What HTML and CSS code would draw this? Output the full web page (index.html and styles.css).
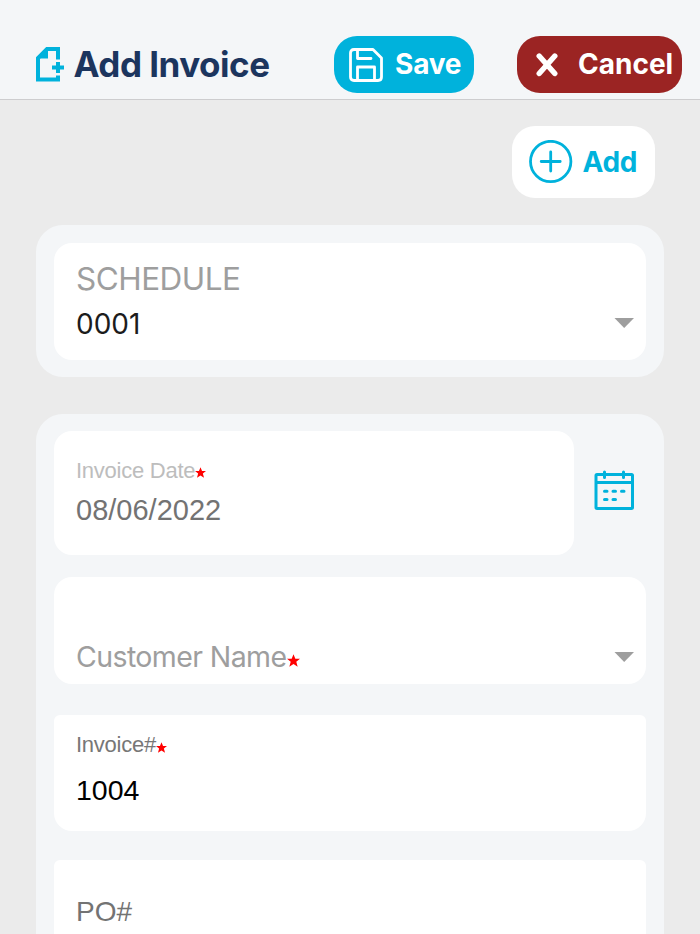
FILE: index.html
```html
<!DOCTYPE html>
<html lang="en">

<head>
    <meta charset="UTF-8">
    <title>Add Invoice</title>
    <link rel="stylesheet" href="styles.css">
</head>

<body>
    <header class="topbar">
        <svg class="doc-icon" width="28" height="36" viewBox="0 0 28 36">
            <path d="M22 12.500V2H11L2 11V32.500H22V28.500" fill="none" stroke="#00b2dc" stroke-width="4"/>
            <path d="M12 1V11.500H1V10L10 1Z" fill="#00b2dc"/>
            <path d="M16 20.500H28M22 15V26" fill="none" stroke="#00b2dc" stroke-width="4"/>
        </svg>
        <h1 class="title">Add Invoice</h1>
        <button class="btn save" type="button">
            <svg class="save-icon" width="34" height="34" viewBox="0 0 34 34" fill="none" stroke="#fff" stroke-width="2.800" stroke-linejoin="round" stroke-linecap="round">
                <path d="M5 1.500H24L32.500 10V29Q32.500 32.500 29 32.500H5Q1.500 32.500 1.500 29V5Q1.500 1.500 5 1.500Z"/>
                <path d="M8.500 2V10.500H22M8.500 32V19H25.500V32"/>
            </svg>
            <span class="save-text">Save</span>
        </button>
        <button class="btn cancel" type="button">
            <svg class="cancel-icon" width="22" height="24" viewBox="0 0 22 24">
                <path d="M3.200 3L18.800 20.500M18.800 3L3.200 20.500" fill="none" stroke="#fff" stroke-width="5.400" stroke-linecap="round"/>
            </svg>
            <span class="cancel-text">Cancel</span>
        </button>
    </header>

    <main class="content">
        <button class="btn add" type="button">
            <svg class="add-icon" width="44" height="44" viewBox="0 0 44 44" fill="none" stroke="#00b2dc" stroke-width="2.800" stroke-linecap="round">
                <circle cx="21.700" cy="21.500" r="20.200"/>
                <path d="M12.200 21.500H31.200M21.700 12V31"/>
            </svg>
            <span class="add-text">Add</span>
        </button>

        <section class="card schedule-card">
            <div class="field schedule">
                <div class="field-text">
                    <div class="schedule-label">SCHEDULE</div>
                    <div class="schedule-value">0001</div>
                </div>
                <svg class="arrow" width="20" height="10" viewBox="0 0 20 10"><path d="M0.500 0H20L10.200 10Z" fill="#9e9e9e"/></svg>
            </div>
        </section>

        <section class="card form-card">
            <div class="date-row">
                <div class="field date">
                    <div class="small-label light"><span class="date-label">Invoice Date</span><svg class="star" width="11" height="11" viewBox="0 0 20 19"><path d="M10 0L12.800 6.800H20L14.300 11.500L16.400 19L10 14.800L3.600 19L5.700 11.500L0 6.800H7.200Z" fill="#f00"/></svg></div>
                    <div class="date-value">08/06/2022</div>
                </div>
                <svg class="calendar" width="40" height="40" viewBox="0 0 40 40" fill="none" stroke="#00b2dc" stroke-width="3" stroke-linejoin="round">
                    <rect x="2" y="4.500" width="36.500" height="34" rx="1"/>
                    <path d="M2 12.500H38.500"/>
                    <path d="M10.500 2V7.500M29.500 2V7.500M10.500 21.200H13M19 21.200H21.500M27.500 21.200H30M10.500 29.500H13M19 29.500H21.500" stroke-linecap="round"/>
                </svg>
            </div>
            <div class="field customer">
                <div class="customer-label"><span class="customer-name">Customer Name</span><svg class="star big" width="13" height="13" viewBox="0 0 20 19"><path d="M10 0L12.800 6.800H20L14.300 11.500L16.400 19L10 14.800L3.600 19L5.700 11.500L0 6.800H7.200Z" fill="#f00"/></svg></div>
                <svg class="arrow" width="20" height="10" viewBox="0 0 20 10"><path d="M0.500 0H20L10.200 10Z" fill="#9e9e9e"/></svg>
            </div>
            <div class="field input invoice">
                <div class="small-label"><span class="invoice-label">Invoice#</span><svg class="star" width="11" height="11" viewBox="0 0 20 19"><path d="M10 0L12.800 6.800H20L14.300 11.500L16.400 19L10 14.800L3.600 19L5.700 11.500L0 6.800H7.200Z" fill="#f00"/></svg></div>
                <div class="invoice-value">1004</div>
            </div>
            <div class="field input po">
                <div class="po-label">PO#</div>
            </div>
        </section>
    </main>
</body>

</html>
```

FILE: styles.css
```css
* { box-sizing: border-box; }
html { overflow: hidden; }
body { margin: 0; height: 934px; overflow: hidden; background: #ebebeb; font-family: Inter, sans-serif; }
svg { display: block; flex: none; }

.topbar { display: flex; height: 100px; padding: 36px 0 0 36px; background: #f4f6f8; border-bottom: 1px solid #cdcdcf; }
.doc-icon { margin-top: 11px; }
.title { width: 260.5px; margin: 8px 0 0 9.5px; font-size: 35px; line-height: 40px; font-weight: 700; letter-spacing: -0.5px; color: #1c355e; white-space: nowrap; }

.btn { display: flex; flex: none; padding: 0; border: 0; border-radius: 23px; font-family: Inter, sans-serif; font-size: 28px; line-height: 40px; font-weight: 700; color: #fff; white-space: nowrap; cursor: pointer; }
.save { width: 140px; height: 57px; background: #00b2dc; }
.save-icon { margin: 12px 0 0 15px; }
.save-text { margin: 8px 0 0 12px; letter-spacing: -0.2px; }
.cancel { width: 165px; height: 57px; margin-left: 43px; background: #9b2423; }
.cancel-icon { margin: 17px 0 0 19px; }
.cancel-text { margin: 8px 0 0 20px; }

.content { padding: 26px 36px 0; }
.add { width: 143px; height: 71.5px; margin: 0 9.5px 0 auto; background: #fff; color: #00b2dc; }
.add-icon { margin: 13.5px 0 0 17.5px; }
.add-text { margin: 16px 0 0 9.5px; letter-spacing: -0.3px; }

.card { padding: 17.5px 18px; border-radius: 27px; background: #f4f6f8; }
.schedule-card { margin-top: 27.5px; height: 152px; }
.form-card { margin-top: 36.5px; height: 560px; }

.field { padding-left: 22px; border-radius: 18px; background: #fff; white-space: nowrap; }
.schedule { display: flex; justify-content: space-between; height: 117px; padding-top: 16px; }
.schedule-label { font-size: 31.5px; line-height: 40px; letter-spacing: -0.5px; color: #9e9e9e; }
.schedule-value { margin-top: 5px; font-size: 28px; line-height: 40px; color: #1c1c1c; }
.schedule .arrow { margin: 59px 12px 0 0; }

.date-row { display: flex; }
.date { width: 520px; height: 124px; padding-top: 24.5px; }
.calendar { margin: 38.5px 0 0 20px; }
.small-label { display: flex; font-family: "Liberation Sans", sans-serif; font-size: 22px; line-height: 30px; letter-spacing: -0.25px; color: #777; }
.light { color: #bdbdbd; }
.star { margin: 12px 0 0; }
.date .star { margin-top: 11.5px; }
.date-value { margin-top: 4.5px; font-family: "Liberation Sans", sans-serif; font-size: 29px; line-height: 40px; color: #737373; }

.customer { display: flex; justify-content: space-between; height: 107.5px; margin-top: 21.5px; padding-top: 60px; }
.customer-label { display: flex; font-size: 28.5px; line-height: 40px; letter-spacing: -0.6px; color: #9e9e9e; }
.star.big { margin: 17px 0 0 0.5px; }
.customer .arrow { margin: 15px 12px 0 0; }

.input { border-radius: 6px 6px 18px 18px; }
.invoice { height: 116.5px; margin-top: 30.5px; padding-top: 15px; }
.invoice-value { margin-top: 10.5px; font-family: "Liberation Sans", sans-serif; font-size: 28.5px; line-height: 40px; color: #000; }
.po { height: 117px; margin-top: 29px; padding-top: 32px; }
.po-label { font-family: "Liberation Sans", sans-serif; font-size: 28px; line-height: 40px; color: #737373; }
```
